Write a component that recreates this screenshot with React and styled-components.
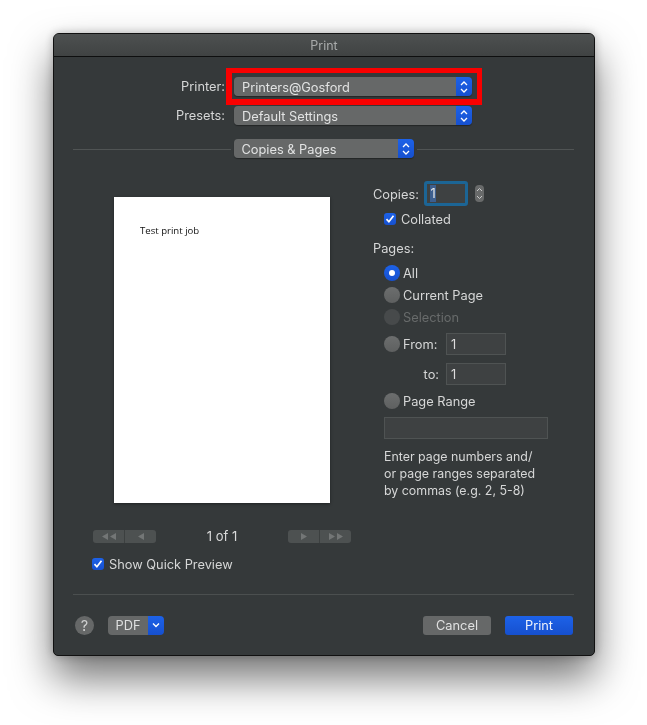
import styled, { createGlobalStyle } from "styled-components";

const Global = createGlobalStyle`
  html, body { margin: 0; padding: 0; background: #fff; }
  body { font-family: "Inter", "Liberation Sans", sans-serif; overflow: hidden; }
`;

const Page = styled.div`
  width: 647px;
  height: 725px;
  padding: 33px 0 0 53px;
  box-sizing: border-box;
  overflow: hidden;
`;

const Window = styled.div`
  width: 542px;
  height: 623px;
  box-sizing: border-box;
  background: #35393a;
  border: 1px solid #111;
  border-radius: 6px 6px 5px 5px;
  box-shadow: 0 22px 42px rgba(0, 0, 0, 0.55), 0 0 10px rgba(0, 0, 0, 0.25);
  display: flex;
  flex-direction: column;
  color: #d6d7d7;
  font-size: 12.8px;
  will-change: transform;
`;

const TitleBar = styled.div`
  height: 22px;
  flex: none;
  display: flex;
  align-items: center;
  justify-content: center;
  background: linear-gradient(#4d5050, #404343);
  border-bottom: 1px solid #0e0f0f;
  border-radius: 5px 5px 0 0;
  color: #a9abab;
  font-size: 12.5px;
`;

const Body = styled.div`
  flex: 1;
  padding: 20px 20px 0 19px;
  display: flex;
  flex-direction: column;
`;

const FormRow = styled.div`
  position: relative;
  display: flex;
  align-items: flex-start;
  height: 20px;
  margin-bottom: 9px;
`;

const RowLabel = styled.div`
  width: 152px;
  margin-right: 9px;
  text-align: right;
  flex: none;
  line-height: 20px;
`;

const Highlight = styled.div`
  position: absolute;
  left: 153px;
  top: -9px;
  width: 256px;
  height: 37px;
  box-sizing: border-box;
  border: solid #f90000;
  border-width: 5px 5px 6px 6px;
  pointer-events: none;
`;

const SelectBox = styled.div`
  width: ${(p) => p.$width}px;
  height: 19px;
  flex: none;
  align-self: flex-start;
  display: flex;
  border-radius: 4px;
  overflow: hidden;
  box-shadow: 0 1px 1px rgba(0, 0, 0, 0.35);
`;

const SelectText = styled.div`
  flex: 1;
  padding-left: 8px;
  background: #666868;
  color: #e2e3e3;
  line-height: 22px;
`;

const SelectArrow = styled.div`
  width: 16px;
  display: flex;
  align-items: center;
  justify-content: center;
  background: linear-gradient(#1d62e8, #1650cf);
`;

const TabRow = styled.div`
  display: flex;
  align-items: center;
  gap: 3px;
  height: 20px;
  margin-top: 4px;
`;

const Line = styled.div`
  flex: 1;
  height: 1px;
  background: #505454;
`;

const Main = styled.div`
  display: flex;
  margin-top: 22px;
`;

const LeftCol = styled.div`
  width: 300px;
  flex: none;
`;

const Paper = styled.div`
  width: 216px;
  height: 306px;
  margin: 16px 0 0 41px;
  box-sizing: border-box;
  padding: 27px 0 0 26px;
  background: #fff;
  color: #111;
  font-family: "Open Sans", "Liberation Sans", sans-serif;
  font-size: 9.6px;
  box-shadow: 0 1px 3px rgba(0, 0, 0, 0.4);
`;

const Pager = styled.div`
  width: 258px;
  margin: 26px 0 0 20px;
  display: flex;
  align-items: center;
  justify-content: space-between;
  height: 14px;
`;

const PagerGroup = styled.div`
  width: 63px;
  height: 13px;
  display: flex;
  border-radius: 3px;
  background: #4d5151;
  overflow: hidden;
`;

const PagerCell = styled.div`
  flex: 1;
  display: flex;
  align-items: center;
  justify-content: center;
  & + & { border-left: 1px solid #3c4040; }
`;

const PageCount = styled.div`
  font-size: 13px;
  color: #d9dada;
`;

const CheckRow = styled.div`
  display: flex;
  align-items: center;
  gap: 5px;
  height: 12px;
  margin: ${(p) => p.$margin};
`;

const CheckBox = styled.div`
  width: 12px;
  height: 12px;
  flex: none;
  border-radius: 3px;
  background: linear-gradient(#1d62e8, #1650cf);
  display: flex;
  align-items: center;
  justify-content: center;
`;

const RightCol = styled.div`
  flex: 1;
`;

const CopiesRow = styled.div`
  display: flex;
  align-items: center;
  height: 25px;
`;

const CopiesLabel = styled.div`
  width: 51px;
  flex: none;
  padding-top: 2px;
`;

const CopiesInput = styled.div`
  width: 44px;
  height: 25px;
  box-sizing: border-box;
  border: 3px solid #1c6595;
  border-radius: 3px;
  background: #3e4142;
  padding: 1px 0 0 3px;
  color: #e8e8e8;
`;

const Selected = styled.span`
  display: block;
  width: 6px;
  height: 17px;
  line-height: 17px;
  text-align: center;
  background: #3d5f8f;
`;

const Stepper = styled.div`
  width: 9px;
  height: 17px;
  margin-left: 7px;
  border-radius: 4px;
  background: #686a6a;
  display: flex;
  align-items: center;
  justify-content: center;
`;

const SectionLabel = styled.div`
  height: 16px;
  line-height: 16px;
  margin-top: 16px;
`;

const PagesBox = styled.div`
  margin: 8px 0 0 11px;
  width: 164px;
`;

const RadioRow = styled.div`
  display: flex;
  align-items: center;
  gap: 3px;
  height: 16px;
  margin-bottom: ${(p) => p.$after ?? 6}px;
  color: ${(p) => (p.$disabled ? "#686b6b" : "inherit")};
`;

const Radio = styled.div`
  width: 16px;
  height: 16px;
  flex: none;
  border-radius: 50%;
  background: ${(p) =>
    p.$on
      ? "linear-gradient(#1d62e8, #1650cf)"
      : p.$disabled
        ? "#474a4b"
        : "linear-gradient(#6c6e6e, #5e6060)"};
  display: flex;
  align-items: center;
  justify-content: center;
`;

const RadioDot = styled.div`
  width: 6px;
  height: 6px;
  border-radius: 50%;
  background: #fff;
`;

const FromRow = styled.div`
  display: flex;
  align-items: center;
  height: 22px;
  margin-bottom: 8px;
`;

const FromLabel = styled.div`
  display: flex;
  align-items: center;
  gap: 3px;
  width: 62px;
  flex: none;
`;

const ToLabel = styled.div`
  width: 55px;
  padding-right: 7px;
  text-align: right;
  flex: none;
`;

const Field = styled.div`
  width: ${(p) => p.$width}px;
  height: 22px;
  box-sizing: border-box;
  border: 1px solid #4f5353;
  background: #3e4142;
  padding-left: 4px;
  line-height: 21px;
  color: #dcdcdc;
`;

const HelpText = styled.div`
  margin-top: 9px;
  line-height: 17px;
  font-size: 12.4px;
  white-space: nowrap;
`;

const Footer = styled.div`
  margin-top: 24px;
  border-top: 1px solid #4b4f4f;
  padding: 20px 1px 0 0;
  display: flex;
  align-items: center;
  height: 20px;
`;

const HelpButton = styled.div`
  width: 19px;
  height: 19px;
  border-radius: 50%;
  background: #666868;
  color: #cfd0d0;
  margin-left: 2px;
  display: flex;
  align-items: center;
  justify-content: center;
  font-size: 14.5px;
`;

const PdfButton = styled.div`
  width: 56px;
  height: 19px;
  margin-left: 14px;
  display: flex;
  border-radius: 4px;
  overflow: hidden;
`;

const PdfText = styled.div`
  flex: 1;
  background: #666868;
  color: #dedfdf;
  text-align: center;
  line-height: 20px;
`;

const PdfArrow = styled.div`
  width: 16px;
  background: linear-gradient(#1d62e8, #1650cf);
  display: flex;
  align-items: center;
  justify-content: center;
`;

const Spacer = styled.div`
  flex: 1;
`;

const Button = styled.div`
  width: 68px;
  height: 19px;
  margin-left: 14px;
  border-radius: 3px;
  text-align: center;
  line-height: 19px;
  background: ${(p) => (p.$primary ? "linear-gradient(#1d62e8, #1650cf)" : "#666868")};
  color: ${(p) => (p.$primary ? "#eef2fb" : "#e0e1e1")};
`;

const UpDown = () => (
  <svg width="10" height="14" viewBox="0 0 10 14" fill="none" stroke="#fff" strokeWidth="1.3">
    <path d="M2 5l3-3 3 3M2 9l3 3 3-3" />
  </svg>
);

const Check = () => (
  <svg width="10" height="10" viewBox="0 0 10 10" fill="none" stroke="#fff" strokeWidth="1.7">
    <path d="M1.5 5.2l2.4 2.6 4.6-6" />
  </svg>
);

const Tri = ({ dir, count = 1 }) => (
  <svg width={count * 8} height="7" viewBox={`0 0 ${count * 8} 7`} fill="#737676">
    {Array.from({ length: count }).map((_, i) => (
      <path
        key={i}
        d={dir === "left" ? `M${i * 8 + 1} 3.5l6-3.5v7z` : `M${i * 8 + 7} 3.5l-6-3.5v7z`}
      />
    ))}
  </svg>
);

const App = () => {
  return (
    <Page>
      <Global />
      <Window>
        <TitleBar>Print</TitleBar>
        <Body>
          <FormRow>
            <RowLabel>Printer:</RowLabel>
            <SelectBox $width={238}>
              <SelectText>Printers@Gosford</SelectText>
              <SelectArrow><UpDown /></SelectArrow>
            </SelectBox>
            <Highlight />
          </FormRow>
          <FormRow>
            <RowLabel>Presets:</RowLabel>
            <SelectBox $width={238}>
              <SelectText>Default Settings</SelectText>
              <SelectArrow><UpDown /></SelectArrow>
            </SelectBox>
          </FormRow>
          <TabRow>
            <Line />
            <SelectBox $width={180}>
              <SelectText>Copies &amp; Pages</SelectText>
              <SelectArrow><UpDown /></SelectArrow>
            </SelectBox>
            <Line />
          </TabRow>
          <Main>
            <LeftCol>
              <Paper>Test print job</Paper>
              <Pager>
                <PagerGroup>
                  <PagerCell><Tri dir="left" count={2} /></PagerCell>
                  <PagerCell><Tri dir="left" /></PagerCell>
                </PagerGroup>
                <PageCount>1 of 1</PageCount>
                <PagerGroup>
                  <PagerCell><Tri dir="right" /></PagerCell>
                  <PagerCell><Tri dir="right" count={2} /></PagerCell>
                </PagerGroup>
              </Pager>
              <CheckRow $margin="15px 0 0 19px">
                <CheckBox><Check /></CheckBox>
                Show Quick Preview
              </CheckRow>
            </LeftCol>
            <RightCol>
              <CopiesRow>
                <CopiesLabel>Copies:</CopiesLabel>
                <CopiesInput><Selected>1</Selected></CopiesInput>
                <Stepper>
                  <svg width="7" height="13" viewBox="0 0 7 13" fill="none" stroke="#c9caca" strokeWidth="1">
                    <path d="M1 4l2.5-2.5L6 4M1 9l2.5 2.5L6 9" />
                  </svg>
                </Stepper>
              </CopiesRow>
              <CheckRow $margin="7px 0 0 11px">
                <CheckBox><Check /></CheckBox>
                Collated
              </CheckRow>
              <SectionLabel>Pages:</SectionLabel>
              <PagesBox>
                <RadioRow><Radio $on><RadioDot /></Radio>All</RadioRow>
                <RadioRow><Radio />Current Page</RadioRow>
                <RadioRow $disabled $after={8}><Radio $disabled />Selection</RadioRow>
                <FromRow>
                  <FromLabel><Radio />From:</FromLabel>
                  <Field $width={60}>1</Field>
                </FromRow>
                <FromRow>
                  <ToLabel>to:</ToLabel>
                  <Field $width={60}>1</Field>
                </FromRow>
                <RadioRow $after={8}><Radio />Page Range</RadioRow>
                <Field $width={164} />
                <HelpText>
                  Enter page numbers and/<br />
                  or page ranges separated<br />
                  by commas (e.g. 2, 5-8)
                </HelpText>
              </PagesBox>
            </RightCol>
          </Main>
          <Footer>
            <HelpButton>?</HelpButton>
            <PdfButton>
              <PdfText>PDF</PdfText>
              <PdfArrow>
                <svg width="10" height="8" viewBox="0 0 10 8" fill="none" stroke="#fff" strokeWidth="1.4">
                  <path d="M2 2.5l3 3 3-3" />
                </svg>
              </PdfArrow>
            </PdfButton>
            <Spacer />
            <Button>Cancel</Button>
            <Button $primary>Print</Button>
          </Footer>
        </Body>
      </Window>
    </Page>
  );
};

export default App;
